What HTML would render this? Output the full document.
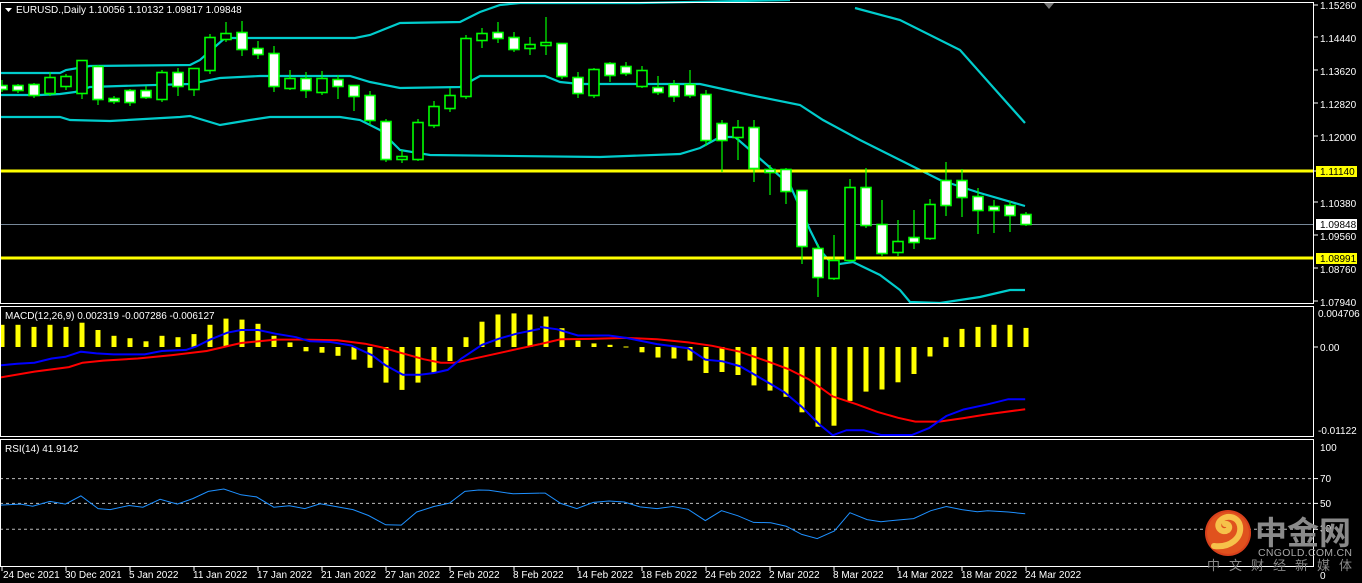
<!DOCTYPE html>
<html><head><meta charset="utf-8"><style>
html,body{margin:0;padding:0;background:#000;width:1362px;height:583px;overflow:hidden;}
svg{position:absolute;left:0;top:0;}
text{font-family:"Liberation Sans",Tahoma,sans-serif;font-size:10px;fill:#fff;}
</style></head><body>
<svg id="s" width="1362" height="583" xmlns="http://www.w3.org/2000/svg">
<g id="g"></g>
<rect x="0.5" y="2.5" width="1313" height="301" fill="none" stroke="#fff"/>
<rect x="0.5" y="306.5" width="1313" height="130" fill="none" stroke="#fff"/>
<rect x="0.5" y="439.5" width="1313" height="127" fill="none" stroke="#fff"/>
<line x1="0" y1="566.5" x2="1313" y2="566.5" stroke="#fff" stroke-dasharray="3,2"/>
<polygon points="1044,3 1054,3 1049,9" fill="#777"/>
<polygon points="5,8 12,8 8.5,12" fill="#fff"/>
<text x="16" y="13">EURUSD.,Daily  1.10056 1.10132 1.09817 1.09848</text>
<text x="5" y="319">MACD(12,26,9) 0.002319 -0.007286 -0.006127</text>
<text x="5" y="452">RSI(14) 41.9142</text>
<rect x="1316" y="166" width="41" height="11" fill="#ff0"/>
<rect x="1316" y="219" width="41" height="11" fill="#fff"/>
<rect x="1316" y="253" width="41" height="11" fill="#ff0"/>
<text x="1320" y="9">1.15260</text>
<text x="1320" y="42">1.14440</text>
<text x="1320" y="75">1.13620</text>
<text x="1320" y="108">1.12820</text>
<text x="1320" y="141">1.12000</text>
<text x="1320" y="175" style="fill:#000">1.11140</text>
<text x="1320" y="207">1.10380</text>
<text x="1320" y="228" style="fill:#000">1.09848</text>
<text x="1320" y="240">1.09560</text>
<text x="1320" y="262" style="fill:#000">1.08991</text>
<text x="1320" y="273">1.08760</text>
<text x="1320" y="306">1.07940</text>
<text x="1318" y="317">0.004706</text>
<text x="1320" y="351">0.00</text>
<text x="1318" y="434">-0.01122</text>
<text x="1320" y="451">100</text>
<text x="1320" y="482">70</text>
<text x="1320" y="507">50</text>
<text x="1320" y="532">30</text>
<text x="1320" y="579">0</text>
<g style="font-size:10px">
<text x="3" y="578">24 Dec 2021</text>
<text x="65" y="578">30 Dec 2021</text>
<text x="129" y="578">5 Jan 2022</text>
<text x="193" y="578">11 Jan 2022</text>
<text x="257" y="578">17 Jan 2022</text>
<text x="321" y="578">21 Jan 2022</text>
<text x="385" y="578">27 Jan 2022</text>
<text x="449" y="578">2 Feb 2022</text>
<text x="513" y="578">8 Feb 2022</text>
<text x="577" y="578">14 Feb 2022</text>
<text x="641" y="578">18 Feb 2022</text>
<text x="705" y="578">24 Feb 2022</text>
<text x="769" y="578">2 Mar 2022</text>
<text x="833" y="578">8 Mar 2022</text>
<text x="897" y="578">14 Mar 2022</text>
<text x="961" y="578">18 Mar 2022</text>
<text x="1025" y="578">24 Mar 2022</text>
</g>
<circle cx="1228" cy="533" r="23" fill="#d8401c"/>
<circle cx="1228" cy="533" r="21" fill="#e0521e"/>
<path d="M1214,546 C1230,548 1242,538 1240,526 C1238,516 1226,514 1220,521 C1215,527 1222,534 1228,530 C1231,527 1228,523 1225,524" fill="none" stroke="#f6c24a" stroke-width="6" stroke-linecap="round"/>
<text x="1255" y="544" style="font-family:'Noto Sans CJK SC',sans-serif;font-size:32px;font-weight:bold;fill:#8a8a8a">中金网</text>
<text x="1258" y="556" style="font-size:10.5px;fill:#a8a8a8;letter-spacing:0.3px">CNGOLD.COM.CN</text>
<text x="1207" y="570" style="font-family:'Noto Sans CJK SC',sans-serif;font-size:13px;fill:#8a8a8a;letter-spacing:9px">中文财经新媒体</text>
</svg>
<script>
var NS="http://www.w3.org/2000/svg",g=document.getElementById("g");
function el(t,a){var e=document.createElementNS(NS,t);for(var k in a)e.setAttribute(k,a[k]);g.appendChild(e);return e;}
function pl(pts,c,w,sc,ox,oy){var s=pts.map(function(p){return (ox+p[0]/sc).toFixed(1)+","+(oy+p[1]/sc).toFixed(1)}).join(" ");el("polyline",{points:s,fill:"none",stroke:c,"stroke-width":w});}
[478.6,503.4,529.3].forEach(function(y){el("line",{x1:0,y1:y,x2:1313,y2:y,stroke:"#bbb","stroke-dasharray":"3,3","stroke-width":1});});
el("line",{x1:0,y1:224.5,x2:1313,y2:224.5,stroke:"#778899","stroke-width":1});
pl([[0,73],[60,73],[66,70],[90,66],[190,65],[200,60],[225,38],[355,38],[370,35],[400,23],[460,22],[480,12],[500,5],[520,3],[640,3],[790,0]],"#00cccc",2.2,1,0,0);
pl([[855,8],[900,20],[960,50],[1000,95],[1025,123]],"#00cccc",2.2,1,0,0);
pl([[0,95],[40,95],[60,94],[75,92],[90,87],[120,86],[190,84],[220,78],[260,76],[350,76],[370,82],[400,88],[460,87],[480,76],[545,76],[560,82],[580,84],[700,84],[750,95],[800,105],[823,120],[860,140],[900,160],[940,180],[980,193],[1025,206]],"#00cccc",2.2,1,0,0);
pl([[0,117],[60,117],[70,120],[110,121],[180,117],[190,116],[220,125],[250,120],[270,117],[340,117],[360,120],[380,130],[400,150],[430,155],[600,157],[680,154],[700,148],[720,137],[735,137],[750,150],[790,185],[810,230],[820,250],[833,265],[853,262],[880,275],[900,290],[910,302],[940,303],[980,297],[1010,290],[1025,290]],"#00cccc",2.2,1,0,0);
el("rect",{x:0,y:169.5,width:1313,height:3,fill:"#ff0"});
el("rect",{x:0,y:256.5,width:1313,height:3,fill:"#ff0"});
var C=[[86,89,80,92],[86,90,84,93],[85,95,83,98],[93,78,72,96],[86,77,74,90],[93,61,60,99],[67,99,65,105],[99,101,96,104],[91,102,89,106],[91,97,86,99],[99,73,70,102],[73,86,68,96],[89,69,68,96],[70,38,34,74],[39,34,22,42],[33,49,21,56],[49,54,41,59],[54,86,46,92],[88,79,70,90],[79,90,72,98],[92,79,71,95],[80,86,75,99],[86,96,85,111],[96,120,91,125],[122,159,119,162],[159,157,150,163],[159,123,119,161],[125,107,101,128],[108,96,88,112],[96,39,35,99],[40,34,28,48],[33,38,22,43],[38,49,32,52],[48,45,37,55],[45,43,17,55],[44,76,43,79],[78,93,72,98],[95,70,68,98],[64,75,62,82],[67,73,62,76],[86,71,66,88],[88,92,76,95],[85,96,80,102],[85,95,70,98],[95,140,90,146],[124,140,120,172],[137,128,120,160],[128,168,120,182],[170,172,165,195],[170,191,168,204],[191,246,190,264],[249,277,244,297],[278,261,235,280],[260,188,179,262],[188,225,168,228],[225,253,200,256],[252,242,220,256],[238,242,210,249],[238,205,199,240],[181,205,162,216],[181,197,169,217],[197,210,188,234],[207,210,200,233],[206,215,201,232],[215,224,212,226]];
C.forEach(function(c,i){var x=2+16*i,o=c[0],cl=c[1];var top=Math.min(o,cl),bot=Math.max(o,cl);
el("line",{x1:x,y1:c[2],x2:x,y2:c[3],stroke:"#00ff00","stroke-width":1.2});
var bear=cl>o;el("rect",{x:x-5,y:top-0.5,width:10,height:Math.max(bot-top,1)+1,fill:bear?"#fff":"#000",stroke:"#00ff00","stroke-width":1.6});});
var M=[324.8,324.8,326.9,324.8,326.9,322.7,330,335.8,338.2,341.3,335.8,337.2,334.1,324.8,318.6,319.6,323.8,335.8,342.4,351.3,352.7,355.8,359.6,367.8,382.6,389.9,382.6,372.3,361,337.2,321.7,314.5,313.4,314.5,316.5,328.2,340.6,343.4,344.8,346.5,352.3,357.5,358.5,360.6,373,372,375,385.4,390.6,396.8,412.3,426.7,425.7,400.9,391.6,389.5,382.3,374,356.5,337.2,328.9,326.9,324.8,324.8,327.9];
M.forEach(function(v,i){var x=2+16*i,z=347;el("rect",{x:x-2.5,y:Math.min(v,z),width:5,height:Math.max(Math.abs(v-z),1),fill:"#ff0"});});
pl([[0,225],[100,208],[200,195],[240,182],[300,176],[400,170],[500,160],[600,148],[700,125],[800,115],[880,115],[980,117],[1060,127],[1110,138],[1170,155],[1230,172],[1280,182],[1320,182],[1400,165],[1500,143],[1568,128]],"#f00",2,2.904,0,300);
pl([[0,128],[60,114],[150,113],[250,110],[340,114],[430,123],[500,133],[580,150],[660,178],[720,200],[780,230],[850,280],[920,303],[980,325],[1040,342],[1090,353],[1160,353],[1230,343],[1300,332],[1409,317]],"#f00",2,2.904,540,300);
pl([[0,190],[50,185],[100,182],[150,170],[190,165],[235,150],[280,155],[330,158],[420,158],[470,148],[540,145],[570,135],[610,115],[660,95],[700,87],[750,87],[800,98],[860,108],[900,120],[960,122],[1020,132],[1080,160],[1120,190],[1170,217],[1220,217],[1260,212],[1300,203],[1340,170],[1400,130],[1450,112],[1500,98],[1568,84]],"#00f",2,2.904,0,300);
pl([[0,78],[50,85],[110,103],[200,103],[250,110],[340,128],[430,140],[480,173],[530,178],[580,192],[620,215],[680,250],[710,268],[760,310],[810,360],[850,393],[890,378],[940,378],[990,392],[1080,392],[1130,372],[1180,337],[1230,318],[1300,303],[1360,288],[1409,288]],"#00f",2,2.904,540,300);
pl([[0,195],[60,192],[95,198],[145,184],[190,192],[235,168],[285,205],[320,208],[375,196],[415,201],[465,178],[515,192],[560,176],[605,155],[650,148],[700,165],[745,171],[795,201],[840,197],[885,205],[930,191],[980,200],[1025,208],[1070,225],[1120,252],[1165,253],[1210,215],[1260,199],[1305,189],[1350,155],[1390,151],[1420,152],[1490,162],[1568,160]],"#1e90ff",1,2.904,0,438);
pl([[0,160],[15,160],[60,190],[107,205],[155,187],[200,183],[245,186],[290,200],[340,205],[385,199],[430,207],[480,240],[527,211],[575,226],[620,245],[670,246],[715,256],[760,280],[805,292],[855,270],[900,217],[950,237],[990,243],[1040,238],[1085,234],[1135,211],[1180,199],[1225,208],[1270,214],[1300,211],[1360,215],[1409,220]],"#1e90ff",1,2.904,540,438);
[5,37,70,103,136,171,202,235,268,301,347,478.6,503.4,529.3].forEach(function(y){el("line",{x1:1314,y1:y,x2:1318,y2:y,stroke:"#fff"});});
for(var i=0;i<17;i++){var x=2+64*i;el("line",{x1:x,y1:567,x2:x,y2:571,stroke:"#fff"});}
</script>
</body></html>
